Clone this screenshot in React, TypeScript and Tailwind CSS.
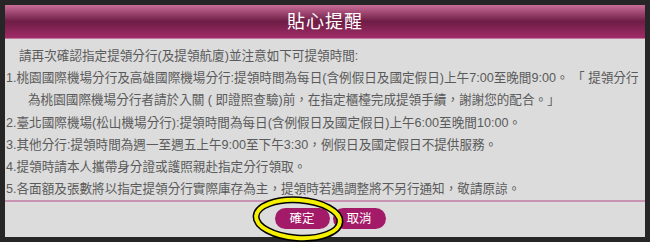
import React from 'react';

const lines: { text: string; indent: string }[] = [
  { text: '請再次確認指定提領分行(及提領航廈)並注意如下可提領時間:', indent: 'pl-[13px]' },
  { text: '1.桃園國際機場分行及高雄國際機場分行:提領時間為每日(含例假日及國定假日)上午7:00至晚間9:00。 「 提領分行', indent: 'pl-0' },
  { text: '為桃園國際機場分行者請於入關 ( 即證照查驗)前，在指定櫃檯完成提領手續，謝謝您的配合。」', indent: 'pl-[22px]' },
  { text: '2.臺北國際機場(松山機場分行):提領時間為每日(含例假日及國定假日)上午6:00至晚間10:00。', indent: 'pl-0' },
  { text: '3.其他分行:提領時間為週一至週五上午9:00至下午3:30，例假日及國定假日不提供服務。', indent: 'pl-0' },
  { text: '4.提領時請本人攜帶身分證或護照親赴指定分行領取。', indent: 'pl-0' },
  { text: '5.各面額及張數將以指定提領分行實際庫存為主，提領時若遇調整將不另行通知，敬請原諒。', indent: 'pl-0' },
];

export default function App() {
  return (
    <div
      className="w-[650px] h-[242px] bg-[#262626] p-[5px] overflow-hidden"
      style={{ fontFamily: '"Liberation Sans", "Noto Sans CJK TC", sans-serif' }}
    >
      <div className="relative w-[640px] h-[232px] bg-[#dcdcdc] flex flex-col">
        {/* header */}
        <div className="h-[34px] shrink-0 bg-gradient-to-b from-[#cb6d99] via-[#6e1d46] to-[#a22c68] border-b border-[#c07aa0] flex items-center justify-center">
          <span className="text-white text-[18px] leading-none tracking-[1px]">貼心提醒</span>
        </div>

        {/* body */}
        <div className="pt-[6px] px-[1px] text-[12.6px] leading-[22.2px] text-[#5a5a5a]">
          {lines.map((l, i) => (
            <div key={i} className={`whitespace-nowrap ${l.indent}`}>{l.text}</div>
          ))}
        </div>

        <div className="h-[2px] bg-[#c994b2] shrink-0"></div>

        {/* buttons */}
        <div className="flex justify-center gap-[3px] pt-[6px] pl-[10px]">
          <button className="w-[55px] h-[21px] rounded-full bg-[#a21a68] text-white text-[12.5px] leading-none">確定</button>
          <button className="w-[53px] h-[21px] rounded-full bg-[#a21a68] text-white text-[12.5px] leading-none">取消</button>
        </div>

        {/* yellow annotation circle */}
        <svg className="absolute left-[242px] top-[191px] pointer-events-none" width="100" height="48" viewBox="0 0 100 48">
          <ellipse cx="51" cy="23" rx="42" ry="19" fill="none" stroke="#000" strokeWidth="7" transform="rotate(4 51 23)" />
          <ellipse cx="51" cy="23" rx="42" ry="19" fill="none" stroke="#f5f000" strokeWidth="4" transform="rotate(4 51 23)" />
        </svg>
      </div>
    </div>
  );
}
